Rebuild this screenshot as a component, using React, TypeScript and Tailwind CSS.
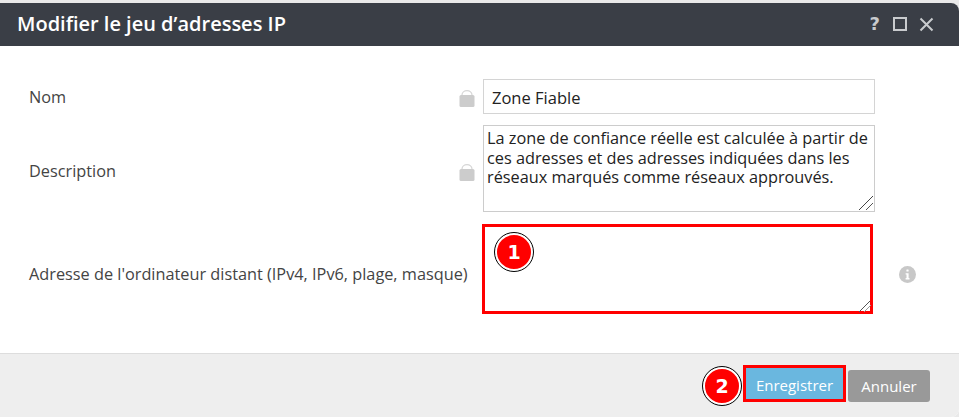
import React from "react";

const font = { fontFamily: '"Open Sans", "Noto Sans", sans-serif' };

function Lock({ className }: { className: string }) {
  return (
    <svg width="16" height="17" viewBox="0 0 16 17" className={`shrink-0 ${className}`}>
      <path d="M3 6V5a5 4.4 0 0 1 10 0v1" fill="none" stroke="#d6d6d6" strokeWidth="1.2" />
      <rect x="0.5" y="5" width="15" height="12" rx="1.5" fill="#cccccc" />
    </svg>
  );
}

function Info() {
  return (
    <svg width="17" height="17" viewBox="0 0 17 17">
      <circle cx="8.5" cy="8.5" r="8.5" fill="#c8c8c8" />
      <rect x="7.4" y="3.6" width="2.2" height="2" rx="0.5" fill="#fff" />
      <path d="M6.6 7.2h3v4.9h.9v1.3H6.6v-1.3h.9V8.5h-.9z" fill="#fff" />
    </svg>
  );
}

function Grip({ long }: { long: boolean }) {
  return (
    <svg width="16" height="16" viewBox="0 0 16 16" className="pointer-events-none absolute bottom-[1px] right-[1px]">
      {long ? <path d="M1 15L15 1" stroke="#444444" strokeWidth="1" /> : <path d="M3 15L14 4" stroke="#555555" strokeWidth="1" />}
      <path d="M8 15L15 8" stroke={long ? "#555555" : "#999999"} strokeWidth="1" />
    </svg>
  );
}

function Badge({ n, className }: { n: string; className: string }) {
  return (
    <div
      className={`absolute flex h-[38px] w-[38px] items-center justify-center rounded-full border-[2px] border-white bg-[#ff0000] text-[19px] font-bold text-white outline outline-1 outline-black ${className}`}
      style={{ fontFamily: '"DejaVu Sans", sans-serif' }}
    >
      {n}
    </div>
  );
}

const description =
  "La zone de confiance réelle est calculée à partir de\nces adresses et des adresses indiquées dans les\nréseaux marqués comme réseaux approuvés.";

export default function App() {
  return (
    <div className="relative h-[417px] w-[959px] overflow-hidden bg-[#e9e9e9] pt-[3px]" style={font}>
      <div className="flex h-[414px] flex-col overflow-hidden rounded-r-[8px] bg-white">
        <header className="flex h-[43px] shrink-0 items-center justify-between bg-[#3a3e46] pb-[1px] pl-[17px] pr-[25px]">
          <h1 className="text-[20px] font-semibold leading-none text-white">Modifier le jeu d’adresses IP</h1>
          <div className="flex items-center text-[#c9cbce]">
            <span className="mr-[13px] text-[18px] font-bold leading-none" style={{ fontFamily: '"DejaVu Sans", sans-serif' }}>?</span>
            <svg width="14" height="14" viewBox="0 0 14 14" className="mr-[12px]">
              <rect x="1" y="1" width="12" height="12" fill="none" stroke="currentColor" strokeWidth="2" />
            </svg>
            <svg width="15" height="15" viewBox="0 0 15 15">
              <path d="M1.5 1.5l12 12M13.5 1.5l-12 12" fill="none" stroke="currentColor" strokeWidth="2" />
            </svg>
          </div>
        </header>

        <main className="flex h-[307px] shrink-0 flex-col pl-[29px] pt-[33px] text-[16.3px] text-[#444444]">
          <div className="flex h-[35px] items-center">
            <label className="mt-[2px] w-[430px]">Nom</label>
            <Lock className="mt-[3px]" />
            <input
              readOnly
              defaultValue="Zone Fiable"
              className="ml-[8px] h-[35px] w-[392px] border border-[#d4d4d4] bg-white px-[8px] pt-[1px] text-[16.5px] text-[#222222] outline-none"
              style={font}
            />
          </div>
          <div className="mt-[11px] flex h-[87px] items-center">
            <label className="mt-[6px] w-[430px]">Description</label>
            <Lock className="mt-[7px]" />
            <div className="relative ml-[8px] h-[87px] w-[392px]">
              <textarea
                readOnly
                wrap="off"
                defaultValue={description}
                className="h-full w-full resize-none overflow-hidden whitespace-pre border border-[#cccccc] bg-white pb-0 pl-[3px] pr-0 pt-[3px] text-[16.3px] leading-[19.6px] text-[#222222] outline-none"
                style={font}
              />
              <Grip long />
            </div>
          </div>
          <div className="mt-[12px] flex h-[90px] items-center">
            <label className="mt-[11px] w-[453px] whitespace-nowrap">Adresse de l'ordinateur distant (IPv4, IPv6, plage, masque)</label>
            <div className="relative h-[90px] w-[391px] shrink-0">
              <textarea
                readOnly
                className="h-full w-full resize-none border-[3px] border-[#ff0000] bg-white outline-none"
              />
              <Grip long={false} />
            </div>
            <span className="ml-[26px] mt-[10px]">
              <Info />
            </span>
          </div>
        </main>

        <footer className="flex flex-1 items-start justify-end border-t border-[#dddddd] bg-[#eeeeee] pr-[29px] pt-[11px]">
          <button className="h-[37px] w-[103px] border-[3px] border-[#ff0000] bg-[#6ab7df] pt-[3px] text-[15px] text-white" style={font}>
            Enregistrer
          </button>
          <button className="ml-[2px] mt-[5px] h-[32px] w-[82px] rounded-[3px] bg-[#999999] text-[15px] text-white" style={font}>
            Annuler
          </button>
        </footer>
      </div>
      <Badge n="1" className="left-[495px] top-[233px]" />
      <Badge n="2" className="left-[703px] top-[367px]" />
    </div>
  );
}
